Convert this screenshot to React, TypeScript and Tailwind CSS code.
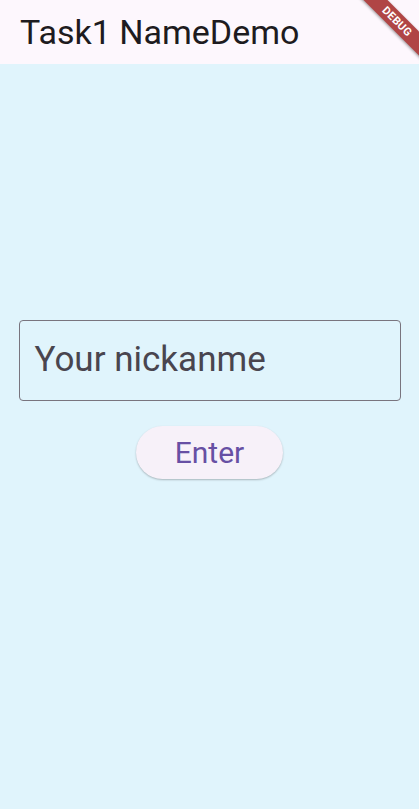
import React from 'react';

export default function App() {
  return (
    <div className="relative w-[419px] h-[809px] overflow-hidden bg-[#e0f4fc] font-['Roboto',sans-serif] flex flex-col">
      {/* App bar */}
      <header className="h-[64px] bg-[#fdf7fd] flex items-center px-[20px] shrink-0">
        <h1 className="text-[34px] leading-none text-[#1d1b20]">Task1 NameDemo</h1>
      </header>

      {/* Body */}
      <main className="flex-1 flex flex-col items-center pt-[256px]">
        <div className="w-[382px] h-[81px] border border-[#79747e] rounded-[4px] flex items-center px-[15px]">
          <span className="text-[35px] text-[#49454f]">Your nickanme</span>
        </div>
        <button className="mt-[25px] w-[147px] h-[53px] rounded-full bg-[#f7f1f9] shadow-[0_1px_2px_rgba(0,0,0,0.25)] text-[30px] text-[#6750a4]">
          Enter
        </button>
      </main>

      {/* Debug banner */}
      <div className="absolute left-[343px] top-[13px] w-[108px] h-[17px] rotate-45 bg-[#b04545] shadow-[0_1px_3px_rgba(0,0,0,0.4)] flex items-center justify-center">
        <span className="text-[11px] font-bold text-white leading-none tracking-[0.3px]">DEBUG</span>
      </div>
    </div>
  );
}
